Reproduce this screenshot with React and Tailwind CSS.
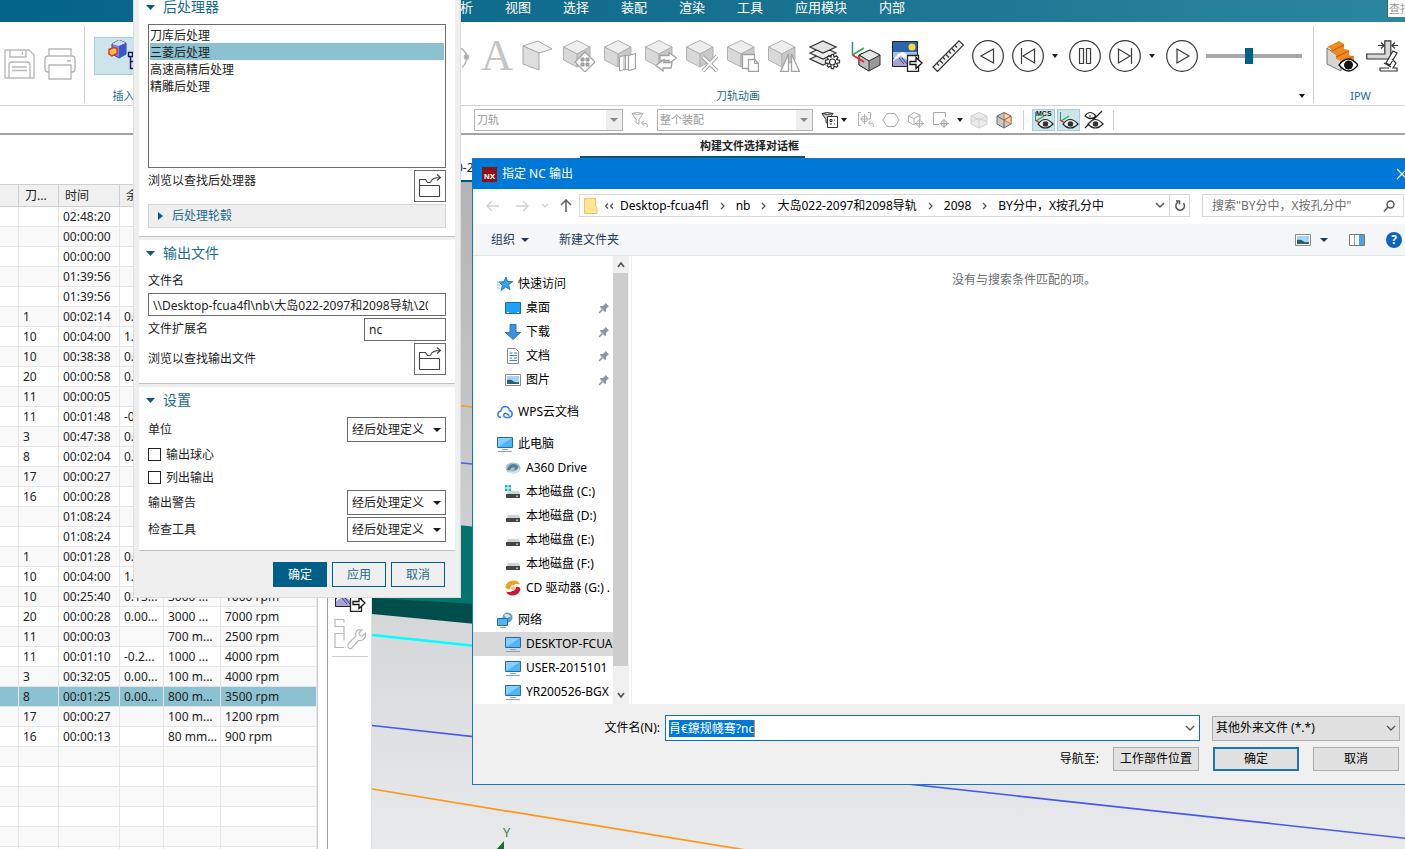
import React, { useState } from "react";

const menuTabs = ["分析", "视图", "选择", "装配", "渲染", "工具", "应用模块", "内部"];

const operations = [
  ["", "02:48:20", "", "", ""],
  ["", "00:00:00", "", "", ""],
  ["", "00:00:00", "", "", ""],
  ["", "01:39:56", "", "", ""],
  ["", "01:39:56", "", "", ""],
  ["1", "00:02:14", "0.0", "", ""],
  ["10", "00:04:00", "1.0", "", ""],
  ["10", "00:38:38", "0.0", "", ""],
  ["20", "00:00:58", "0.0", "", ""],
  ["11", "00:00:05", "", "", ""],
  ["11", "00:01:48", "-0.2", "", ""],
  ["3", "00:47:38", "0.0", "", ""],
  ["8", "00:02:04", "0.0", "", ""],
  ["17", "00:00:27", "", "", ""],
  ["16", "00:00:28", "", "", ""],
  ["", "01:08:24", "", "", ""],
  ["", "01:08:24", "", "", ""],
  ["1", "00:01:28", "0.0", "", ""],
  ["10", "00:04:00", "1.0", "", ""],
  ["10", "00:25:40", "0.13...", "3000 ...", "1000 rpm"],
  ["20", "00:00:28", "0.00...", "3000 ...", "7000 rpm"],
  ["11", "00:00:03", "", "700 m...", "2500 rpm"],
  ["11", "00:01:10", "-0.2...", "1000 ...", "4000 rpm"],
  ["3", "00:32:05", "0.00...", "100 m...", "4000 rpm"],
  ["8", "00:01:25", "0.00...", "800 m...", "3500 rpm"],
  ["17", "00:00:27", "", "100 m...", "1200 rpm"],
  ["16", "00:00:13", "", "80 mm...", "900 rpm"],
  ["", "", "", "", ""],
  ["", "", "", "", ""],
  ["", "", "", "", ""],
  ["", "", "", "", ""],
  ["", "", "", "", ""],
  ["", "", "", "", ""],
];
const SELECTED_ROW = 24;

/* ---------- icons ---------- */

const Svg = ({ size = 32, children, ...rest }) => (
  <svg
    width={size}
    height={size}
    viewBox={`0 0 ${size} ${size}`}
    fill="none"
    className="shrink-0"
    aria-hidden="true"
    {...rest}
  >
    {children}
  </svg>
);

const Caret = ({ color = "#1a1a1a", w = 6 }) => (
  <svg width={w} height="4" viewBox="0 0 6 4" preserveAspectRatio="none" className="shrink-0" aria-hidden="true">
    <path d="M0 0h6L3 4z" fill={color} />
  </svg>
);

const SaveIcon = () => (
  <Svg stroke="#b9b9b9" strokeWidth="1.4">
    <path d="M1 2h24l5 5v23H1z" />
    <path d="M6 2v7h16V2M18.500 3.500v3.500" />
    <path d="M5 30V17q0-3 3-3h15q3 0 3 3v13M8 19h15M8 22.500h15" />
  </Svg>
);

const PrintIcon = () => (
  <Svg stroke="#b9b9b9" strokeWidth="1.4">
    <path d="M5 8V1h22v7M5 24H4q-3 0-3-3V11q0-3 3-3h24q3 0 3 3v10q0 3-3 3h-1M23 13h4" />
    <path d="M5 17h22v14H5z" />
  </Svg>
);

const InsertIcon = () => (
  <Svg>
    <path d="M4 4l7-4 7 3v11l-7 4-7-4z" fill="#6c86dc" stroke="#2f3f9c" />
    <path d="M4 4l7 2 7-3-7-3z" fill="#d5dcf5" />
    <path d="M11 6v12l7-4V3z" fill="#3f58c8" />
    <path d="M1 9.500l5-2 3 1v5l-5 2.500-3-2z" fill="#f9c63d" stroke="#e3342b" strokeWidth="1.500" />
    <path d="M22.500 15.500v13h4M22.500 21.500h4" stroke="#101075" strokeWidth="1.400" />
    <path d="M20.500 12.500h4v4h-4zM26.500 18.500h4v4h-4zM26.500 25.500h4v4h-4z" fill="#dff" stroke="#101075" strokeWidth="1.400" />
  </Svg>
);

const CurveIcon = () => (
  <Svg stroke="#b5b5b5" strokeWidth="1.500">
    <path d="M14 6q12 2 13 11-1 8-5 10" />
    <circle cx="26.500" cy="17" r="2" fill="#aaa" />
  </Svg>
);

const LetterIcon = () => (
  <span className="flex h-8 w-8 shrink-0 items-center justify-center font-['Liberation_Serif',serif] text-[44px] leading-8 text-[#c4c4c4]">
    A
  </span>
);

const SheetIcon = () => (
  <Svg stroke="#a8a8a8">
    <path d="M1 6L16 1l14 8-13 4z" fill="#f1f1f1" />
    <path d="M1 6l16 7v17L1 24z" fill="#dedede" />
  </Svg>
);

const Cube = ({ children }) => (
  <Svg stroke="#b0b0b0">
    <path d="M.5 7L14 .5 27 7l-13 7z" fill="#eeeeee" />
    <path d="M.5 7L14 14v13L.5 20z" fill="#d9d9d9" />
    <path d="M27 7l-13 7v13l13-7z" fill="#c9c9c9" />
    {children}
  </Svg>
);

const MoveCube = () => (
  <Cube>
    <path d="M22 12l10 10-10 10-10-10z" fill="#fff" stroke="#a2a2a2" strokeWidth="1.300" />
    <path d="M18 18h3v3h-3zM23 18h3v3h-3zM18 23h3v3h-3zM23 23h3v3h-3z" fill="#aaa" stroke="#999" />
  </Cube>
);
const PatternCube = () => (
  <Cube>
    <path d="M15.500 17l6-2v14l-6 2zM20 16l5-1v14l-5 1z" fill="#fff" stroke="#a2a2a2" />
    <path d="M24.500 15.500l7-2v15l-7 2z" fill="#fff" stroke="#a2a2a2" strokeWidth="1.300" />
  </Cube>
);
const ReplaceCube = () => (
  <Cube>
    <path d="M15 15.500h9v-3l7.500 5.500-7.500 5.500v-3h-9z" fill="#fff" stroke="#a2a2a2" strokeWidth="1.300" />
    <path d="M27 22.500h-8v-3L11 25.500l7 5.500v-3h8z" fill="#fff" stroke="#a2a2a2" strokeWidth="1.300" />
  </Cube>
);
const DeleteCube = () => (
  <Cube>
    <path d="M17 17l14 14M31 16L17 31" stroke="#9d9d9d" strokeWidth="4" />
    <path d="M17 17l14 14M31 16L17 31" stroke="#fff" strokeWidth="2" />
  </Cube>
);
const CopyCube = () => (
  <Cube>
    <path d="M15.500 14.500h12v14h-12z" fill="#fff" stroke="#a2a2a2" strokeWidth="1.300" />
    <path d="M21.500 19.500h6l4 4v8h-10z" fill="#fff" stroke="#a2a2a2" strokeWidth="1.300" />
    <path d="M27.500 19.500v4h4" stroke="#a2a2a2" />
  </Cube>
);
const MirrorCube = () => (
  <Cube>
    <path d="M20.500 14v17.500h-8zM23.500 14v17.500h8z" fill="#fff" stroke="#a2a2a2" strokeWidth="1.300" />
  </Cube>
);

const LayerIcon = () => (
  <Svg stroke="#333" strokeWidth="1.200">
    <path d="M1 19l13-6 13 6-13 6z" fill="#e8e8e8" />
    <path d="M1 13l13-6 13 6-13 6z" fill="#eeeeee" />
    <path d="M1 7l13-6 13 6-13 6z" fill="#e4e4e4" />
    <path
      d="M22.500 14.500h2l.6 2.600 2.300-1.300 1.500 1.500-1.300 2.300 2.900.6v2.600l-2.900.7 1.300 2.300-1.500 1.500-2.300-1.300-.6 2.600h-2l-.6-2.600-2.300 1.300-1.500-1.500 1.300-2.300-2.900-.7v-2.600l2.900-.6-1.300-2.300 1.500-1.500 2.300 1.300z"
      fill="#fff"
    />
    <circle cx="23.500" cy="22" r="3" fill="#fff" />
  </Svg>
);

const CsysIcon = () => (
  <Svg>
    <path d="M2.500 2v13" stroke="#2a8aa0" strokeWidth="1.500" />
    <path d="M2.500 15L14 8" stroke="#2fae3c" strokeWidth="1.500" />
    <path d="M9 15l11-5 10 5v10l-11 6-10-6z" fill="#9a9a9a" stroke="#333" />
    <path d="M9 15l11-5 10 5-11 6z" fill="#e8e8e8" stroke="#333" />
    <path d="M9 15l10 6v10L9 25z" fill="#bcbcbc" stroke="#333" />
    <path d="M2.500 15L14 22" stroke="#e22" strokeWidth="1.500" />
  </Svg>
);

const ExportImageIcon = () => (
  <Svg>
    <path d="M1.500 1.500h25v25h-25z" fill="#2d63a8" stroke="#223" />
    <path d="M2 12h24v6H2z" fill="#9cc4e6" />
    <circle cx="21" cy="7" r="3.500" fill="#ffd83a" />
    <path d="M2 20q7-10 12-7 6 4 12 11v2H2z" fill="#fff" />
    <path d="M2 21l8-5 6 4 4 6H2z" fill="#a9a4d8" />
    <path d="M8 18l5 6M11 18l5 6" stroke="#3d3c80" />
    <path d="M16.500 15.500h11v16h-11z" fill="#fff" stroke="#222" strokeWidth="1.300" />
    <path d="M19 21.500h6v-4l6 5.500-6 5.500v-4h-6z" fill="#fff" stroke="#111" strokeWidth="1.300" />
  </Svg>
);

const RulerIcon = () => (
  <Svg stroke="#333" strokeWidth="1.200">
    <path d="M1 27L27 .8 31.500 5 5.500 31.500z" fill="#f1f1f1" />
    <path d="M5 23.500l2 2M8 20.500l3 3M11 17.500l2 2M14 14.500l3 3M17 11.500l2 2M20 8.500l3 3M23 5.500l2 2" />
  </Svg>
);

const CircleIcon = ({ d }) => (
  <Svg stroke="#3a3a3a" strokeWidth="1.200">
    <circle cx="16" cy="16" r="15.300" />
    <path d={d} />
  </Svg>
);

const IpwIcon = () => (
  <Svg>
    <path d="M1 8v16l14 7V18z" fill="#d6d6d6" stroke="#777" />
    <path d="M1 7L13 1l5 3v5l5 1v5l5 2v6l-13 7v-9l-5-2v-5l-5-2V9z" fill="#f08a1c" />
    <path d="M6 11l12-6M10 17l13-6M15 22l13-6" stroke="#b85c08" />
    <path d="M13 25q9-12 19 0-9 12-19 0z" fill="#fff" stroke="#111" strokeWidth="1.300" />
    <circle cx="22.500" cy="25" r="4.500" fill="#111" />
  </Svg>
);

const ScopeIcon = () => (
  <Svg stroke="#333" strokeWidth="1.200">
    <path d="M.8 14h18V.8h6V19H.8z" fill="#d9d9d9" />
    <path d="M12 5.500h6M15 2.500l3 3-3 3M32 5.500h-6M29 2.500l-3 3 3 3" />
    <path d="M27 11l4 2-7 12-4-2zM14 31h17v-3h-4l3-5-4-4M14 31v-3h9M18 23l7 4" fill="#fff" />
  </Svg>
);

const FolderOpenIcon = () => (
  <Svg size={24} stroke="#444" strokeWidth="1.100">
    <path d="M1.500 22.500v-17h6l2 3h3M21.500 11.500v11h-20M1.500 11.500h20" />
    <path d="M12.500 8.500q1-5 10-5M19 .5l3.500 3-3.500 3" />
  </Svg>
);

const EyeIcon = ({ mcs, slash }) => (
  <Svg size={20}>
    {mcs ? (
      <text x="2" y="6" fontSize="7" fontWeight="bold" fill="#222" fontFamily="Liberation Sans">MCS</text>
    ) : null}
    {slash ? (
      <path d="M1 6q5-7 11 0-5 5-11 0zM5 6h2M1 18L18 1" stroke="#222" strokeWidth="1.200" />
    ) : (
      <>
        <path d="M1.500 2v9" stroke="#2a8aa0" />
        <path d="M2 11l8-5" stroke="#2fae3c" strokeWidth="1.400" />
        <path d="M1 10l5 3" stroke="#e22" strokeWidth="1.400" />
      </>
    )}
    <path d="M4 14q7-9 15 0-8 8-15 0z" fill="#fff" fillOpacity=".6" stroke="#222" strokeWidth="1.200" />
    <circle cx="11.500" cy="14" r="2.800" fill="#333" />
  </Svg>
);

const FunnelIcon = ({ color = "#333", list }) => (
  <Svg size={18} stroke={color}>
    <path d="M1 2.500q5-2 11 0l-4 6v5l-3-2v-3zM1 2.500q5 2 11 0" fill={list ? "#ccc" : "none"} />
    {list ? (
      <path d="M6.500 5.500h10v11h-10zM9 8.500h2v2H9zM13 9h1M9 13h2M13 13h1" fill="#fff" />
    ) : (
      <path d="M16 16q2-4-5-4M13 9.500L10.500 12l2.500 2.500" />
    )}
  </Svg>
);

const Monitor = () => (
  <Svg size={16}>
    <path d="M.5 1.500h15v10H.5z" fill="#4db4f5" stroke="#2c6a9c" />
    <path d="M1 2h14L1 11z" fill="#83d0ff" />
    <path d="M5 13.500h6M1 15.500h14" stroke="#8fa3b3" />
  </Svg>
);

const Disk = ({ win }) => (
  <Svg size={16}>
    {win ? <path d="M0 1h2.500v2.500H0zM3.500 1H6v2.500H3.500zM0 4.500h2.500V7H0zM3.500 4.500H6V7H3.500z" fill="#14b4d8" /> : null}
    <path d="M3 7h11l1 3H2z" fill="#d2d2d2" />
    <path d="M1 10h14v4H1z" fill="#454545" />
    <path d="M11 11.500h2v1.500h-2z" fill="#7fe08a" />
  </Svg>
);

const StarIcon = () => (
  <Svg size={16}>
    <path d="M9 1l1.600 4.500 5 .2-4 3 1.300 5L8.700 11 4 14.500l1.500-5L2 6l4.800-.3z" fill="#3f9fe8" stroke="#1c79c4" />
    <path d="M0 6h4M0 9h3M0 12h3" stroke="#7fc1f2" />
  </Svg>
);
const DesktopIcon = () => (
  <Svg size={16}>
    <path d="M.5 2.500h15v11H.5z" fill="#1ea1f7" stroke="#0f6cb4" />
    <path d="M2 12.500h2M12 12.500h2" stroke="#fff" />
  </Svg>
);
const DownloadIcon = () => (
  <Svg size={16}>
    <path d="M5 .5h6v8h4.500L8 15.500.5 8.500H5z" fill="#3d92e0" stroke="#2a78c2" />
  </Svg>
);
const DocIcon = () => (
  <Svg size={16}>
    <path d="M2.500.5h8l3 3v12h-11z" fill="#fff" stroke="#8a8a8a" />
    <path d="M4.500 5h3M9 5h3M4.500 7.500H12M4.500 10H7M9 10h3M4.500 12.500H12" stroke="#2f89c8" />
  </Svg>
);
const PictureIcon = () => (
  <Svg size={16}>
    <path d="M.5 2.500h15v11H.5z" fill="#fff" stroke="#8a8a8a" />
    <path d="M2 4h12v8H2z" fill="#a5d3f5" />
    <path d="M2 8q4-1 6 1t6 1v2H2z" fill="#2b5f6f" />
  </Svg>
);
const CloudIcon = () => (
  <Svg size={16} stroke="#3b7bea" strokeWidth="1.500">
    <path d="M4 13.500q-3.300-.5-3.200-3.500.4-2.500 3-3Q4.500 2.500 8.500 2.500q3.500.5 3.800 4 3 .8 2.900 3.700-.4 3-3.200 3.300H9q-2.500-.5-2.300-2.500.5-2 2.500-1.600T12 12" />
  </Svg>
);
const DriveIcon = () => (
  <Svg size={16}>
    <ellipse cx="8" cy="8" rx="7.500" ry="5.500" fill="#a9bfcc" />
    <path d="M2 10q1-6 7-6 5 1 4 4-2 3-6 2 3 0 3-2-3-2-5 2z" fill="#4f7f99" />
    <path d="M4 12q7 2 10-3" stroke="#dde8ee" strokeWidth="1.500" />
  </Svg>
);
const CdIcon = () => (
  <Svg size={16}>
    <path d="M.5 7Q2 .5 8.500.5q5 0 6.500 4-6-2-9 4-4 2-5.500-1.500z" fill="#f2a01e" />
    <path d="M15.500 9Q14 15.500 7.500 15.500q-5 0-6.500-4 6 2 9-4 4-2 5.500 1.500z" fill="#c4183c" />
    <circle cx="8" cy="8" r="2.300" fill="#e8c070" stroke="#fff" />
  </Svg>
);
const NetworkIcon = () => (
  <Svg size={16}>
    <circle cx="10.500" cy="5.500" r="5" fill="#5c9ec4" />
    <path d="M7 3q4-3 7 2-3-1-4 2z" fill="#cfe6f0" />
    <path d="M.5 6.500h10v7H.5z" fill="#4db4f5" stroke="#2c6a9c" />
    <path d="M3 15.500h6" stroke="#8fa3b3" />
  </Svg>
);
const PinIcon = () => (
  <Svg size={12}>
    <path d="M7.500 1L11 4.500l-1 .5-2 2v2.500L7 10 2 5l.5-1H5l2-2z" fill="#8795a1" />
    <path d="M4.500 7.500L1 11" stroke="#8795a1" strokeWidth="1.300" />
  </Svg>
);

const Chevron = ({ d = "M1 1l3 3-3 3", w = 5, h = 8, color = "#555", sw = 1.3 }) => (
  <svg width={w} height={h} viewBox={`0 0 ${w} ${h}`} fill="none" className="shrink-0" aria-hidden="true">
    <path d={d} stroke={color} strokeWidth={sw} />
  </svg>
);
const DOWN = "M1 1l4 4 4-4";

/* ---------- ribbon ---------- */

const IconButton = ({ label, children, className = "" }) => (
  <button type="button" aria-label={label} className={`flex shrink-0 items-center justify-center ${className}`}>
    {children}
  </button>
);

const MenuBar = () => (
  <nav className="flex h-[22px] shrink-0 items-start justify-between bg-linear-to-r from-[#046488] via-[#15708f] to-[#2b86a0]">
    <div className="flex gap-8 pl-[447px] text-[13px] leading-[14px] text-white">
      {menuTabs.map((tab) => (
        <button type="button" key={tab}>
          {tab}
        </button>
      ))}
    </div>
    <input
      aria-label="查找命令"
      placeholder="查找命令"
      className="h-[17px] w-[18px] border-l border-[#555] bg-white pl-px text-[11px] leading-4 placeholder:text-[#999]"
    />
  </nav>
);

const Ribbon = () => (
  <div className="flex h-[84px] shrink-0 border-b border-[#d4d4d4] bg-white">
    <div className="mt-1 mb-0.5 flex w-[85px] shrink-0 gap-2 border-r border-[#d0d0d0] pt-[22px] pl-1">
      <IconButton label="保存" className="h-8"><SaveIcon /></IconButton>
      <IconButton label="打印" className="h-8"><PrintIcon /></IconButton>
    </div>
    <div className="mt-1 mb-0.5 flex w-[78px] shrink-0 flex-col justify-between border-r border-[#d0d0d0] pt-[11px] pl-[9px]">
      <IconButton label="插入" className="h-[38px] w-[60px] border border-[#a6cfd8] bg-[#cbe5ea]">
        <InsertIcon />
      </IconButton>
      <span className="pr-[9px] text-center text-[11px] leading-[14px] text-[#1b6c8c]">插入</span>
    </div>
    <div className="mt-1 mb-0.5 flex flex-1 flex-col justify-between border-r border-[#d0d0d0] pt-[14px]">
      <div className="flex h-8 items-center gap-2 pl-[277px]">
        <div className="flex gap-[9px]">
          <IconButton label="曲线"><CurveIcon /></IconButton>
          <IconButton label="文本"><LetterIcon /></IconButton>
          <IconButton label="片体"><SheetIcon /></IconButton>
          <IconButton label="移动"><MoveCube /></IconButton>
          <IconButton label="阵列"><PatternCube /></IconButton>
          <IconButton label="替换"><ReplaceCube /></IconButton>
          <IconButton label="删除"><DeleteCube /></IconButton>
          <IconButton label="复制"><CopyCube /></IconButton>
          <IconButton label="镜像"><MirrorCube /></IconButton>
          <IconButton label="图层设置"><LayerIcon /></IconButton>
          <IconButton label="坐标系"><CsysIcon /></IconButton>
          <IconButton label="导出图像"><ExportImageIcon /></IconButton>
          <IconButton label="测量"><RulerIcon /></IconButton>
        </div>
        <IconButton label="后退"><CircleIcon d="M21.500 9v14L9 16z" /></IconButton>
        <IconButton label="上一步"><CircleIcon d="M22.500 9v14L11 16zM9.500 8v16" /></IconButton>
        <IconButton label="上一步选项" className="mr-[3px]"><Caret /></IconButton>
        <IconButton label="暂停"><CircleIcon d="M10.500 8.500h4v15h-4zM17.500 8.500h4v15h-4z" /></IconButton>
        <IconButton label="下一步"><CircleIcon d="M9.500 9v14L21 16zM22.500 8v16" /></IconButton>
        <IconButton label="下一步选项" className="mr-[3px]"><Caret /></IconButton>
        <IconButton label="播放"><CircleIcon d="M11 9v14l12-7z" /></IconButton>
        <input
          type="range"
          aria-label="动画速度"
          min="0"
          max="100"
          defaultValue="44"
          className="h-4 w-24 appearance-none bg-transparent [&::-webkit-slider-runnable-track]:h-1 [&::-webkit-slider-runnable-track]:bg-[#a8a8a8] [&::-webkit-slider-thumb]:-mt-1.5 [&::-webkit-slider-thumb]:h-4 [&::-webkit-slider-thumb]:w-2 [&::-webkit-slider-thumb]:appearance-none [&::-webkit-slider-thumb]:bg-[#00628a]"
        />
      </div>
      <div className="flex items-center pr-2 pl-[14px]">
        <span className="flex-1 text-center text-[11px] leading-[14px] text-[#1b6c8c]">刀轨动画</span>
        <Caret />
      </div>
    </div>
    <div className="mt-1 mb-0.5 flex w-[91px] shrink-0 flex-col justify-between pt-[14px]">
      <div className="flex gap-2 pl-3">
        <IconButton label="显示 IPW"><IpwIcon /></IconButton>
        <IconButton label="分析 IPW"><ScopeIcon /></IconButton>
      </div>
      <span className="pl-0.5 text-center text-[11px] leading-[14px] text-[#1b6c8c]">IPW</span>
    </div>
  </div>
);

const FilterSelect = ({ label, option, className }) => (
  <div className={`relative ${className}`}>
    <select
      aria-label={label}
      className="block h-[22px] w-full appearance-none border border-[#b4b4b4] bg-white pl-[2px] text-[11px] leading-4 text-[#9a9a9a]"
    >
      <option>{option}</option>
    </select>
    <span className="pointer-events-none absolute inset-y-px right-px flex w-4 items-center justify-center bg-[#eeeeee]">
      <Caret color="#888" w={8} />
    </span>
  </div>
);

const FilterBar = () => (
  <div className="flex h-[29px] shrink-0 items-center border-b-2 border-[#a3a3a3] bg-white pl-[474px]">
    <FilterSelect label="类型过滤器" option="刀轨" className="w-[149px]" />
    <IconButton label="重置过滤器" className="mx-2"><FunnelIcon color="#aaa" /></IconButton>
    <FilterSelect label="选择范围" option="整个装配" className="w-[156px]" />
    <IconButton label="常规选择过滤器" className="ml-2 gap-0.5"><FunnelIcon list /><Caret /></IconButton>
    <div className="ml-2.5 flex items-center gap-[7px]">
      <IconButton label="点构造器">
        <Svg size={18} stroke="#b0b0b0">
          <path d="M4 1.500H1.500v13H4M11 1.500h2.500V8M7.500 3v10M3 8h10M16 16q2-4-4-4M14 9.500L11.500 12l2.500 2.500" />
          <circle cx="7.500" cy="8" r="3" />
        </Svg>
      </IconButton>
      <IconButton label="多边形">
        <Svg size={18} stroke="#b0b0b0"><path d="M5 2.500h8l4 6.500-4 6.500H5L1 9z" /></Svg>
      </IconButton>
      <IconButton label="体选择">
        <Svg size={18} stroke="#b0b0b0">
          <path d="M1.500 5L7 1.500 13 4v5M1.500 5v6L7 14V7.500L1.500 5M7 7.500L13 4M12.500 8v9M8 12.500h9" />
          <circle cx="12.500" cy="12.500" r="3" />
        </Svg>
      </IconButton>
      <IconButton label="矩形选择" className="gap-[7px]">
        <Svg size={18} stroke="#a8a8a8">
          <path d="M7 13.500H1.500v-12h12V6M12 8v9M7.500 12.500H17" />
          <circle cx="12" cy="12.500" r="3" />
        </Svg>
        <Caret />
      </IconButton>
      <IconButton label="隐藏体">
        <Svg size={18} stroke="#cfcfcf">
          <path d="M1 5l8-3.500L17 5v8l-8 4-8-4z" fill="#ececec" />
          <path d="M1 5l8 4 8-4M9 9v8M1 11l8-4 8 4" />
        </Svg>
      </IconButton>
      <IconButton label="着色体">
        <Svg size={18} stroke="#666">
          <path d="M2 5l7-3.500L16 5v8l-7 4-7-4z" fill="#c8c8c8" />
          <path d="M9 2v7l7 4V5z" fill="#f5d4bd" stroke="#e0702a" />
          <path d="M2 5l7 4v8M9 9l7-4" />
        </Svg>
      </IconButton>
    </div>
    <div className="ml-2.5 flex h-5 items-center gap-0.5 border-x border-[#d0d0d0] px-2">
      <IconButton label="显示 MCS" className="h-[22px] w-[23px] border border-[#a6cfd8] bg-[#cbe5ea]"><EyeIcon mcs /></IconButton>
      <IconButton label="显示坐标系" className="h-[22px] w-[23px] border border-[#a6cfd8] bg-[#cbe5ea]"><EyeIcon /></IconButton>
      <IconButton label="反转显示" className="h-[22px] w-[23px]"><EyeIcon slash /></IconButton>
    </div>
  </div>
);

/* ---------- workspace ---------- */

const OperationTable = () => (
  <div className="w-[328px] shrink-0 overflow-hidden border-r border-[#a0a0a0] bg-white pt-[49px]">
    <table className="w-[318px] table-fixed border-separate border-spacing-0 border-t border-r border-[#cfcfcf] text-[12px] leading-[19px] text-[#222]">
      <colgroup>
        <col className="w-[19px]" />
        <col className="w-[40px]" />
        <col className="w-[61px]" />
        <col className="w-[44px]" />
        <col className="w-[57px]" />
        <col />
      </colgroup>
      <thead>
        <tr className="bg-[#f0f0f0]">
          {["", "刀...", "时间", "余量", "进给", "速度"].map((head, i) => (
            <th key={i} className="h-[22px] overflow-hidden border-r border-b border-[#cfcfcf] px-1.5 text-left font-normal whitespace-nowrap">
              {head}
            </th>
          ))}
        </tr>
      </thead>
      <tbody>
        {operations.map((row, i) => (
          <tr key={i} className={i === SELECTED_ROW ? "bg-[#8bc1d1]" : i % 2 ? "bg-[#f9f9f9]" : "bg-white"}>
            <td className="h-5 border-r border-b border-[#e5e5e5]" />
            {row.map((cell, j) => (
              <td key={j} className="h-5 overflow-hidden border-r border-b border-[#e5e5e5] pl-1 whitespace-nowrap">
                {cell}
              </td>
            ))}
          </tr>
        ))}
      </tbody>
    </table>
  </div>
);

const SideTools = () => (
  <div className="flex w-[44px] shrink-0 flex-col items-center gap-1.5 border-r border-[#e0e0e0] bg-white pt-[445px]">
    <IconButton label="导出图像"><ExportImageIcon /></IconButton>
    <IconButton label="机床设置">
      <Svg stroke="#b8b8b8" strokeWidth="1.200">
        <path d="M10 1.500H1v7h9v7H1v7M10 15.500v7M1 22.500v7h9M10 1.500v3" />
        <path d="M14 26l8-8q-1-5 3-6.500l3 .5-3 3 1 2.500 2.500.500 3-3q1 5-3 7-2 1-4 .500l-7 8q-4 1-3.500-4.500z" fill="#fff" />
      </Svg>
    </IconButton>
    <span className="h-px w-9 bg-[#cfcfcf]" />
  </div>
);

const Viewport = () => (
  <div className="flex min-w-0 flex-1 flex-col">
    <div className="h-[23px] shrink-0 bg-white pl-[208px]">
      <p className="w-[225px] border-b-2 border-[#00597c] pr-1.5 text-right text-[11px] leading-[21px] font-bold text-[#222]">
        构建文件选择对话框
      </p>
    </div>
    <div className="h-6 shrink-0 border-b-2 border-[#00597c] bg-white pl-[84px] text-[12px] leading-5 text-[#222]">0-2</div>
    <svg className="min-h-0 w-full flex-1 bg-linear-to-b from-[#b1b3b4] via-[#cdced0] to-[#e8eaeb]" aria-label="刀轨视图">
      <path d="M0 333L104 345V426L0 420z" fill="#00746f" />
      <path d="M0 416l104 6v20L0 432z" fill="#004d4b" />
      <path d="M0 453l104 11" stroke="#00ffff" strokeWidth="2.500" />
      <path d="M0 214L110 226" stroke="#ff9a1a" strokeWidth="1.700" />
      <path d="M0 272l110 11" stroke="#4a5cf0" strokeWidth="1.700" />
      <path d="M0 543.500L1040 657" stroke="#4558f0" strokeWidth="1.700" />
      <path d="M0 607l380 62" stroke="#ff961a" strokeWidth="1.700" />
      <text x="131" y="655" fontSize="13" fill="#3f7d46" fontFamily="Noto Sans">Y</text>
      <path d="M124 668l8-9v9z" fill="#1d6b2c" />
    </svg>
  </div>
);

/* ---------- post-process dialog ---------- */

const SectionTitle = ({ children }) => (
  <button type="button" className="-ml-[2px] flex items-center gap-2 text-[14px] leading-5 text-[#1b6c8c]">
    <svg width="9" height="5" viewBox="0 0 9 5" aria-hidden="true"><path d="M0 0h9L4.500 5z" fill="#0b5c7c" /></svg>
    {children}
  </button>
);

const BrowseRow = ({ label, className = "" }) => (
  <div className={`flex h-8 justify-between ${className}`}>
    <span className="leading-[22px]">{label}</span>
    <button type="button" aria-label={label} className="flex h-8 w-8 items-center justify-center border border-[#6c6c6c] bg-white">
      <FolderOpenIcon />
    </button>
  </div>
);

const DefineSelect = ({ id, label }) => (
  <div className="flex items-center justify-between">
    <label htmlFor={id}>{label}</label>
    <div className="relative w-[99px]">
      <select id={id} className="block h-[25px] w-full appearance-none border border-[#6c6c6c] bg-white pl-1 text-[12px] text-[#222]">
        <option>经后处理定义</option>
      </select>
      <span className="pointer-events-none absolute inset-y-0 right-[5px] flex items-center">
        <Caret w={8} />
      </span>
    </div>
  </div>
);

const Check = ({ label }) => (
  <label className="flex h-[23px] items-center gap-[5px]">
    <input type="checkbox" className="h-[13px] w-[13px] appearance-none border border-[#222] bg-white checked:bg-[#00628a]" />
    {label}
  </label>
);

const PostDialog = () => {
  const [post, setPost] = useState("三菱后处理");
  return (
    <section
      aria-label="后处理"
      className="absolute top-0 left-[133px] w-[328px] border-x border-b border-[#dcdcdc] bg-[#efefef] px-[5px] text-[12px] leading-4 text-[#222]"
    >
      <div className="-mt-[3px] border-b border-[#c2c2c2] bg-white px-[9px] pb-2">
        <SectionTitle>后处理器</SectionTitle>
        <select
          size="8"
          aria-label="后处理器"
          value={post}
          onChange={(e) => setPost(e.target.value)}
          className="mt-[7px] block h-36 w-full overflow-hidden border border-[#6c6c6c] bg-white p-px text-[12px] outline-none"
        >
          {["刀库后处理", "三菱后处理", "高速高精后处理", "精雕后处理"].map((name) => (
            <option
              key={name}
              className="h-[17px] min-h-0 p-0 leading-4 text-[#222] checked:bg-linear-to-r checked:from-[#8bc1d1] checked:to-[#8bc1d1]"
            >
              {name}
            </option>
          ))}
        </select>
        <BrowseRow label="浏览以查找后处理器" className="mt-0.5" />
        <button type="button" className="mt-0.5 flex h-6 w-full items-center gap-[9px] border border-[#d6d6d6] bg-[#efefef] pl-[9px] text-[#1b6c8c]">
          <svg width="5" height="8" viewBox="0 0 5 8" aria-hidden="true"><path d="M0 0l5 4-5 4z" fill="#0b5c7c" /></svg>
          后处理轮毂
        </button>
      </div>
      <div className="mt-[3px] border-b border-[#c2c2c2] bg-white px-[9px] pt-[3px] pb-2">
        <SectionTitle>输出文件</SectionTitle>
        <label htmlFor="outfile" className="mt-2.5 block">文件名</label>
        <input
          id="outfile"
          defaultValue="\\Desktop-fcua4fl\nb\大岛022-2097和2098导轨\2098"
          className="mt-1 block h-[23px] w-full border border-[#6c6c6c] bg-white pr-[17px] pl-1 outline-none"
        />
        <div className="mt-0.5 flex h-[23px] justify-between">
          <label htmlFor="ext" className="leading-[22px]">文件扩展名</label>
          <input id="ext" defaultValue="nc" className="w-[82px] border border-[#6c6c6c] bg-white px-1 outline-none" />
        </div>
        <div className="mt-0.5">
          <BrowseRow label="浏览以查找输出文件" className="[&>span]:leading-8" />
        </div>
      </div>
      <div className="mt-[3px] border-b border-[#c2c2c2] bg-white px-[9px] pt-[3px] pb-2">
        <SectionTitle>设置</SectionTitle>
        <div className="mt-[7px]">
          <DefineSelect id="unit" label="单位" />
        </div>
        <div className="my-px">
          <Check label="输出球心" />
          <Check label="列出输出" />
        </div>
        <div className="flex flex-col gap-0.5">
          <DefineSelect id="warn" label="输出警告" />
          <DefineSelect id="tool" label="检查工具" />
        </div>
      </div>
      <div className="flex justify-end gap-[5px] px-2.5 pt-[11px] pb-2.5">
        <button type="button" className="h-[25px] w-[54px] bg-[#005f87] text-white">确定</button>
        <button type="button" className="h-[25px] w-[54px] border border-[#005f87] text-[#1b6c8c]">应用</button>
        <button type="button" className="h-[25px] w-[54px] border border-[#005f87] text-[#1b6c8c]">取消</button>
      </div>
    </section>
  );
};

/* ---------- file dialog ---------- */

const places = [
  [{ name: "快速访问", icon: StarIcon, root: true },
    { name: "桌面", icon: DesktopIcon, pin: true },
    { name: "下载", icon: DownloadIcon, pin: true },
    { name: "文档", icon: DocIcon, pin: true },
    { name: "图片", icon: PictureIcon, pin: true }],
  [{ name: "WPS云文档", icon: CloudIcon, root: true }],
  [{ name: "此电脑", icon: Monitor, root: true },
    { name: "A360 Drive", icon: DriveIcon },
    { name: "本地磁盘 (C:)", icon: () => <Disk win /> },
    { name: "本地磁盘 (D:)", icon: Disk },
    { name: "本地磁盘 (E:)", icon: Disk },
    { name: "本地磁盘 (F:)", icon: Disk },
    { name: "CD 驱动器 (G:) .", icon: CdIcon }],
  [{ name: "网络", icon: NetworkIcon, root: true },
    { name: "DESKTOP-FCUA", icon: Monitor, active: true },
    { name: "USER-2015101", icon: Monitor },
    { name: "YR200526-BGX", icon: Monitor }],
];

const crumbs = ["Desktop-fcua4fl", "nb", "大岛022-2097和2098导轨", "2098", "BY分中，X按孔分中"];

const FileDialog = () => (
  <section
    aria-label="指定 NC 输出"
    className="absolute top-[158px] -right-3 left-[472px] flex h-[627px] flex-col border border-[#1a76bd] bg-[#f0f0f0] text-[12px] leading-4 text-black"
  >
    <header className="flex h-[30px] shrink-0 items-center gap-[5px] bg-[#0078d7] pl-[9px] text-white">
      <span className="flex h-[15px] w-[15px] items-end justify-center bg-[#8a1414] font-['Liberation_Sans',sans-serif] text-[8px] leading-[11px] font-bold">
        NX
      </span>
      <h1 className="flex-1">指定 NC 输出</h1>
      <button type="button" aria-label="关闭" className="mr-2">
        <Chevron d="M1 1l10 10M11 1L1 11" w={12} h={12} color="#fff" sw={1.2} />
      </button>
    </header>

    <div className="flex h-[35px] shrink-0 items-center bg-white pr-3 pb-0.5 pl-[13px]">
      <IconButton label="后退"><Chevron d="M6 1L1 6l5 5M1 6h12" w={13} h={12} color="#d0d0d0" /></IconButton>
      <IconButton label="前进" className="ml-[17px]"><Chevron d="M7 1l5 5-5 5M12 6H0" w={13} h={12} color="#d0d0d0" /></IconButton>
      <IconButton label="最近位置" className="ml-3"><Chevron d="M1 1l3 3 3-3" w={8} h={6} color="#d0d0d0" /></IconButton>
      <IconButton label="上移" className="ml-[11px]"><Chevron d="M1 6l5-5 5 5M6 1v12" w={12} h={13} color="#666" sw={1.6} /></IconButton>
      <div className="ml-[7px] flex h-[23px] min-w-0 flex-1 items-center border border-[#d9d9d9] pl-1">
        <svg width="14" height="16" viewBox="0 0 14 16" className="mr-1.5 shrink-0" aria-hidden="true">
          <path d="M.5.5h11v8l1.500 1v6H.5z" fill="#ffe594" stroke="#eac75c" />
        </svg>
        <span className="mr-1.5 flex"><Chevron d="M4 1.500L1.500 4 4 6.500" /><Chevron d="M4 1.500L1.500 4 4 6.500" /></span>
        <nav className="flex flex-1 items-center gap-[11px]">
          {crumbs.map((crumb, i) => (
            <React.Fragment key={crumb}>
              {i > 0 && <Chevron />}
              <a href="#" className="whitespace-nowrap">{crumb}</a>
            </React.Fragment>
          ))}
        </nav>
        <IconButton label="以前的位置" className="mr-1"><Chevron d={DOWN} w={10} h={7} color="#555" sw={1.5} /></IconButton>
        <IconButton label="刷新" className="h-full w-5 border-l border-[#d9d9d9]">
          <Svg size={12} stroke="#555" strokeWidth="1.500"><path d="M9.500 3.200A4.300 4.300 0 1 1 4 2.200M2 1h3.500v3.500" /></Svg>
        </IconButton>
      </div>
      <div className="ml-3 flex h-[23px] w-[202px] items-center border border-[#d9d9d9] pr-2 pl-[9px]">
        <input
          aria-label="搜索"
          placeholder={'搜索"BY分中，X按孔分中"'}
          className="min-w-0 flex-1 outline-none placeholder:text-[#6d6d6d]"
        />
        <Svg size={12} stroke="#555" strokeWidth="1.500"><circle cx="7.500" cy="4.500" r="3.500" /><path d="M5 7l-4 4.500" /></Svg>
      </div>
    </div>

    <div className="flex h-8 shrink-0 items-center border-b border-[#e3e6e9] bg-[#f5f6f7] pr-[14px] pl-[18px] text-[#1e395b]">
      <button type="button" className="flex items-center gap-1.5">组织 <Caret w={8} color="#1e395b" /></button>
      <button type="button" className="ml-[30px]">新建文件夹</button>
      <div className="ml-auto flex items-center">
        <IconButton label="更改视图"><PictureIcon /></IconButton>
        <IconButton label="更多选项" className="ml-[9px]"><Caret w={8} color="#1e395b" /></IconButton>
        <IconButton label="预览窗格" className="mx-[21px]">
          <Svg size={16}>
            <path d="M.5 2.500h15v11H.5z" fill="#fff" stroke="#777" />
            <path d="M5.500 3v10" stroke="#999" />
            <path d="M10 3h5v10h-5z" fill="#4aa3e8" />
          </Svg>
        </IconButton>
        <button type="button" aria-label="帮助" className="h-4 w-4 rounded-full bg-[#0b62c0] text-center text-[12px] leading-4 font-bold text-white">?</button>
      </div>
    </div>

    <div className="flex min-h-0 flex-1 bg-white">
      <div className="w-[140px] shrink-0 overflow-hidden pt-4">
        {places.map((group, g) => (
          <ul key={g} className="mb-2">
            {group.map((place) => {
              const Icon = place.icon;
              return (
                <li key={place.name}>
                  <a
                    href="#"
                    className={`flex h-6 items-center gap-[5px] whitespace-nowrap ${place.root ? "pl-6" : "pl-8"} ${place.active ? "bg-[#d9d9d9]" : ""}`}
                  >
                    <Icon />
                    <span className="flex-1">{place.name}</span>
                    {place.pin && <span className="mr-[3px]"><PinIcon /></span>}
                  </a>
                </li>
              );
            })}
          </ul>
        ))}
      </div>
      <div className="flex w-4 shrink-0 flex-col bg-[#f0f0f0]" aria-hidden="true">
        <span className="flex h-[17px] items-center justify-center"><Chevron d="M1 5l3-4 3 4" w={8} h={6} sw={1.7} /></span>
        <span className="mr-px flex-1 bg-[#cdcdcd]" />
        <span className="flex h-[38px] items-end justify-center pb-1.5"><Chevron d="M1 1l3 4 3-4" w={8} h={6} sw={1.7} /></span>
      </div>
      <div className="ml-0.5 flex-1 border-l border-[#f0f0f0] pt-4 text-center text-[#6d6d6d]">没有与搜索条件匹配的项。</div>
    </div>

    <div className="flex h-20 shrink-0 flex-col gap-[6px] pt-[11px] pr-4">
      <div className="flex items-center">
        <label htmlFor="ncname" className="w-[187px] shrink-0 text-right">文件名(N):</label>
        <div className="ml-[5px] flex h-[26px] min-w-0 flex-1 items-center border border-[#0f6fb8] bg-white pr-1 pl-[3px]">
          <input
            id="ncname"
            defaultValue="肙€鐐规帴骞?nc"
            size="10"
            className="field-sizing-content h-[17px] border-r border-[#e08a4a] bg-[#0078d7] text-white outline-none"
          />
          <span className="ml-auto"><Chevron d={DOWN} w={10} h={7} color="#555" /></span>
        </div>
        <div className="relative ml-3 w-[188px]">
          <select aria-label="文件类型" className="block h-[25px] w-full appearance-none border border-[#adadad] bg-[#e1e1e1] pl-[3px]">
            <option>其他外来文件 (*.*)</option>
          </select>
          <span className="pointer-events-none absolute inset-y-0 right-1 flex items-center">
            <Chevron d={DOWN} w={10} h={7} color="#555" />
          </span>
        </div>
      </div>
      <div className="flex items-center justify-end">
        <span className="mr-[14px]">导航至:</span>
        <button type="button" className="h-6 w-[86px] border border-[#adadad] bg-[#e1e1e1]">工作部件位置</button>
        <button type="button" className="mx-[14px] h-6 w-[86px] border-2 border-[#1a74b8] bg-[#e1e1e1]">确定</button>
        <button type="button" className="mr-px h-6 w-[86px] border border-[#adadad] bg-[#e1e1e1]">取消</button>
      </div>
    </div>
  </section>
);

const App = () => {
  return (
    <div className="relative flex h-screen flex-col overflow-hidden bg-white font-['Noto_Sans','Noto_Sans_CJK_SC',sans-serif]">
      <MenuBar />
      <Ribbon />
      <FilterBar />
      <main className="flex min-h-0 flex-1">
        <OperationTable />
        <SideTools />
        <Viewport />
      </main>
      <PostDialog />
      <FileDialog />
    </div>
  );
};

export default App;
